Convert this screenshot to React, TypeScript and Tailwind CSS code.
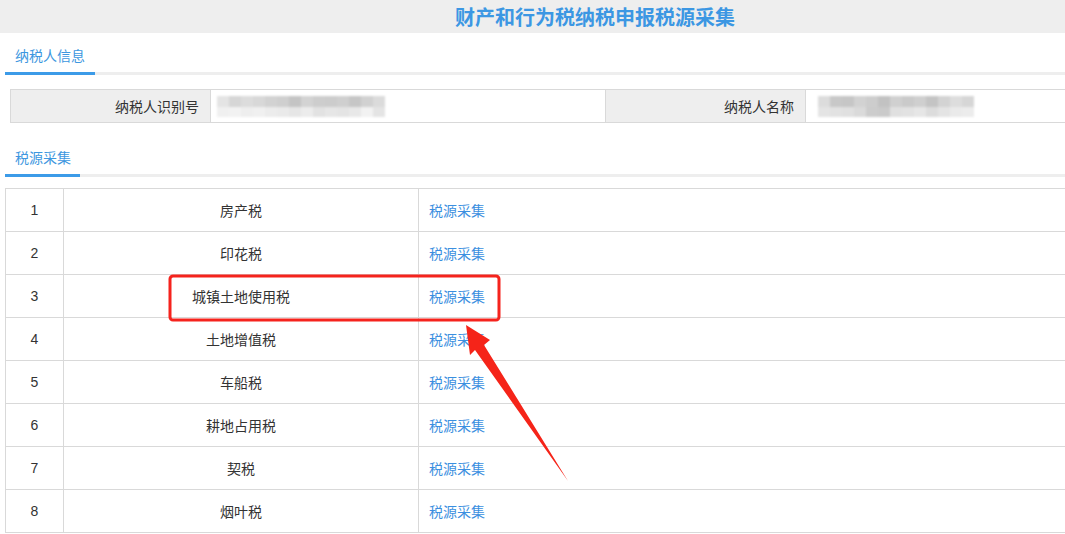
import React from "react";

const FONT = { fontFamily: '"Microsoft YaHei", "Noto Sans CJK SC", "Liberation Sans", sans-serif' };

const taxes = ["房产税", "印花税", "城镇土地使用税", "土地增值税", "车船税", "耕地占用税", "契税", "烟叶税"];

// mosaic-blurred values in the info row
const Mosaic = ({ top, bottom }: { top: string[]; bottom: string[] }) => (
  <div className="flex flex-col blur-[1px]">
    <div className="flex">
      {top.map((c, i) => (
        <div key={i} className="w-[12px] h-[11px]" style={{ background: c }} />
      ))}
    </div>
    <div className="flex">
      {bottom.map((c, i) => (
        <div key={i} className="w-[12px] h-[10px]" style={{ background: c }} />
      ))}
    </div>
  </div>
);

const SectionTab = ({ label, barWidth }: { label: string; barWidth: string }) => (
  <div className="flex flex-col">
    <div className="pl-[15px] text-[14px] leading-[20px] text-[#3d97e0]">{label}</div>
    <div className="flex mt-[7px] pl-[5px]">
      <div className={`${barWidth} h-[3px] bg-[#3c9be8]`} />
      <div className="flex-1 h-[3px] bg-[#eeeeee]" />
    </div>
  </div>
);

export default function App() {
  return (
    <div className="relative w-[1065px] h-[534px] overflow-hidden bg-white text-[#333]" style={FONT}>
      <div className="h-[33px] bg-[#eeeeee] flex items-center pl-[455px]">
        <h1 className="text-[20px] font-bold text-[#3c97e3] leading-none">财产和行为税纳税申报税源采集</h1>
      </div>

      <div className="pt-[12px]">
        <SectionTab label="纳税人信息" barWidth="w-[90px]" />
      </div>

      <div className="ml-[10px] mt-[14px] w-[1100px] grid grid-cols-[200px_395px_200px_1fr] border border-[#d9d9d9] h-[34px] text-[14px]">
        <div className="bg-[#eeeeee] flex items-center justify-end pr-[11px] border-r border-[#d9d9d9]">纳税人识别号</div>
        <div className="flex items-center pl-[6px] border-r border-[#d9d9d9]">
          <Mosaic
            top={["#e4e4e4", "#d6d6d6", "#dcdcdc", "#d8d8d8", "#d2d2d2", "#cfcfcf", "#c4c4c4", "#d3d3d3", "#cdcdcd", "#cccccc", "#cfcfcf", "#c6c6c6", "#d1d1d1", "#dbdbdb"]}
            bottom={["#f0f0f0", "#f2f2f2", "#eeeeee", "#f0f0f0", "#ececec", "#eaeaea", "#e6e6e6", "#ececec", "#e2e2e2", "#e6e6e6", "#e4e4e4", "#e8e8e8", "#f2f2f2", "#e4e4e4"]}
          />
        </div>
        <div className="bg-[#eeeeee] flex items-center justify-end pr-[11px] border-r border-[#d9d9d9]">纳税人名称</div>
        <div className="flex items-center pl-[12px]">
          <Mosaic
            top={["#dcdcdc", "#c8c8c8", "#c6c6c6", "#d2d2d2", "#cdcdcd", "#c2c2c2", "#d0d0d0", "#cacaca", "#cfcfcf", "#c4c4c4", "#d3d3d3", "#dddddd", "#d6d6d6"]}
            bottom={["#e4e4e4", "#e2e2e2", "#e0e0e0", "#dadada", "#cccccc", "#cacaca", "#e0e0e0", "#e2e2e2", "#e6e6e6", "#dcdcdc", "#e4e4e4", "#eaeaea", "#ececec"]}
          />
        </div>
      </div>

      <div className="pt-[24px]">
        <SectionTab label="税源采集" barWidth="w-[75px]" />
      </div>

      <div className="ml-[5px] mt-[11px] w-[1100px] border-t border-l border-[#d9d9d9] text-[14px]">
        {taxes.map((name, i) => (
          <div key={name} className="grid grid-cols-[58px_355px_1fr] h-[43px] border-b border-[#d9d9d9]">
            <div className="flex items-center justify-center border-r border-[#d9d9d9]" style={{ fontFamily: '"Liberation Sans", sans-serif' }}>
              {i + 1}
            </div>
            <div className="flex items-center justify-center border-r border-[#d9d9d9]">{name}</div>
            <div className="flex items-center pl-[10px]">
              <a className="text-[#3b8fe0] cursor-pointer">税源采集</a>
            </div>
          </div>
        ))}
      </div>

      {/* annotation overlay */}
      <svg className="absolute left-0 top-0 pointer-events-none" width="1065" height="534">
        <rect x="170" y="276" width="329" height="44" rx="3" fill="none" stroke="#f5231d" strokeWidth="3" />
        <polygon points="466,325 490,340 484,345 568,481 475,350 470,355" fill="#f52419" />
      </svg>
    </div>
  );
}
